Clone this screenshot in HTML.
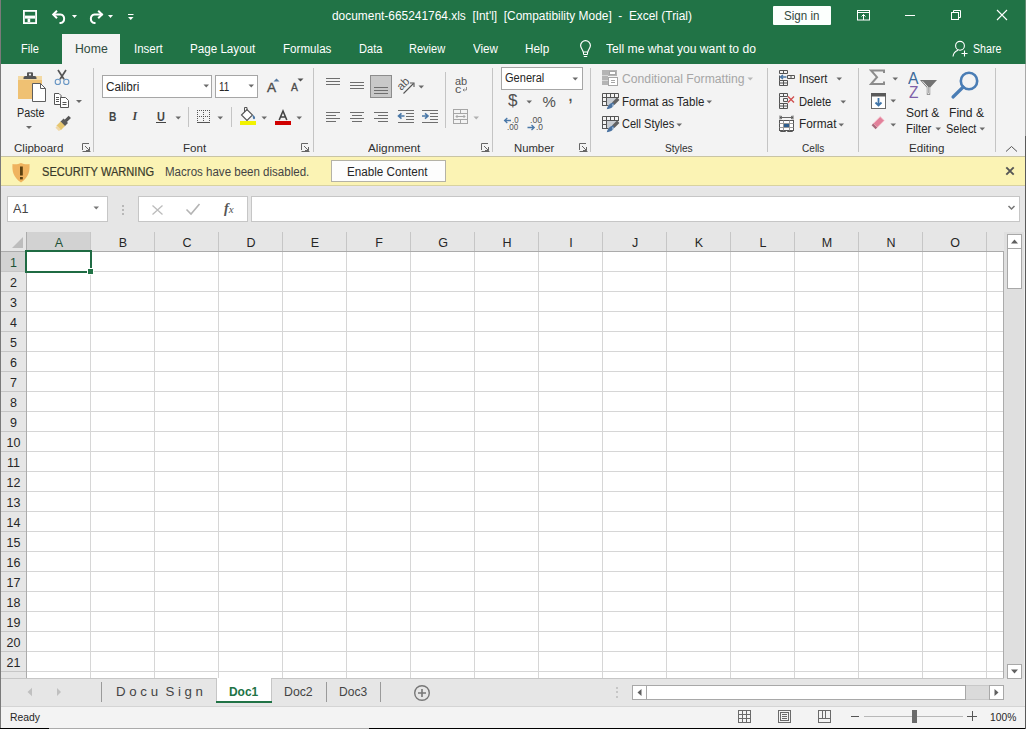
<!DOCTYPE html>
<html><head><meta charset="utf-8"><style>
html,body{margin:0;padding:0;}
body{width:1026px;height:729px;overflow:hidden;position:relative;background:#fff;font-family:"Liberation Sans",sans-serif;}
.r{position:absolute;}
.t{position:absolute;white-space:nowrap;line-height:1;}
.c{text-align:center;}
</style></head><body>
<div class="r" style="left:0px;top:0px;width:1026px;height:64px;background:#217346"></div><div class="r" style="left:0px;top:64px;width:1026px;height:93px;background:#f3f3f3"></div><div class="r" style="left:62px;top:34px;width:58px;height:30px;background:#f3f3f3"></div><div class="r" style="left:0px;top:156px;width:1026px;height:1px;background:#c8c4a4"></div><div class="r" style="left:0px;top:157px;width:1026px;height:29px;background:#fbf3b4"></div><div class="r" style="left:0px;top:185px;width:1026px;height:1px;background:#d8d2a0"></div><div class="r" style="left:0px;top:186px;width:1026px;height:46px;background:#e6e6e6"></div><div class="r" style="left:0px;top:186px;width:1026px;height:2px;background:#e8e6ee"></div><div class="r" style="left:0px;top:232px;width:1026px;height:446px;background:#e6e6e6"></div><div class="r" style="left:26px;top:252px;width:977px;height:426px;background:#ffffff"></div><div class="r" style="left:0px;top:678px;width:1026px;height:28px;background:#e6e6e6"></div><div class="r" style="left:0px;top:678px;width:1004px;height:1px;background:#c6c6c6"></div><div class="r" style="left:0px;top:706px;width:1026px;height:22px;background:#f3f3f3"></div><div class="r" style="left:0px;top:706px;width:1026px;height:1px;background:#d4d4d4"></div><div class="r" style="left:0px;top:728px;width:49px;height:1px;background:#000"></div><div class="r" style="left:49px;top:728px;width:320px;height:1px;background:#aaa"></div><div class="r" style="left:369px;top:728px;width:657px;height:1px;background:#000"></div><div class="t" style="left:332.00px;top:10.34px;font-size:12px;color:#ffffff;transform:scaleX(0.9926);transform-origin:0 0;">document-665241764.xls&nbsp; [Int'l]&nbsp; [Compatibility Mode]&nbsp; -&nbsp; Excel (Trial)</div><div class="r" style="left:773px;top:6px;width:58px;height:19px;background:#fcfffd;border-radius:1px"></div><div class="t" style="left:783.90px;top:10.04px;font-size:12px;color:#33493d;transform:scaleX(0.9648);transform-origin:0 0;">Sign in</div><div class="t" style="left:21.40px;top:42.54px;font-size:12px;color:#ffffff;transform:scaleX(0.9251);transform-origin:0 0;">File</div><div class="t" style="left:74.60px;top:42.54px;font-size:12px;color:#2e4a3c;transform:scaleX(1.0216);transform-origin:0 0;">Home</div><div class="t" style="left:134.00px;top:42.54px;font-size:12px;color:#ffffff;transform:scaleX(0.9600);transform-origin:0 0;">Insert</div><div class="t" style="left:190.00px;top:42.54px;font-size:12px;color:#ffffff;transform:scaleX(0.9691);transform-origin:0 0;">Page Layout</div><div class="t" style="left:282.60px;top:42.54px;font-size:12px;color:#ffffff;transform:scaleX(0.9678);transform-origin:0 0;">Formulas</div><div class="t" style="left:358.50px;top:42.54px;font-size:12px;color:#ffffff;transform:scaleX(0.9231);transform-origin:0 0;">Data</div><div class="t" style="left:409.20px;top:42.54px;font-size:12px;color:#ffffff;transform:scaleX(0.9190);transform-origin:0 0;">Review</div><div class="t" style="left:472.70px;top:42.54px;font-size:12px;color:#ffffff;transform:scaleX(0.9679);transform-origin:0 0;">View</div><div class="t" style="left:525.30px;top:42.54px;font-size:12px;color:#ffffff;transform:scaleX(0.9802);transform-origin:0 0;">Help</div><div class="t" style="left:606.00px;top:42.54px;font-size:12px;color:#ffffff;transform:scaleX(1.0123);transform-origin:0 0;">Tell me what you want to do</div><div class="t" style="left:972.60px;top:42.54px;font-size:12px;color:#ffffff;transform:scaleX(0.8872);transform-origin:0 0;">Share</div><div class="r" style="left:93px;top:68px;width:1px;height:84px;background:#c4c4c4"></div><div class="r" style="left:313px;top:68px;width:1px;height:84px;background:#c4c4c4"></div><div class="r" style="left:492px;top:68px;width:1px;height:84px;background:#c4c4c4"></div><div class="r" style="left:590px;top:68px;width:1px;height:84px;background:#c4c4c4"></div><div class="r" style="left:767px;top:68px;width:1px;height:84px;background:#c4c4c4"></div><div class="r" style="left:858px;top:68px;width:1px;height:84px;background:#c4c4c4"></div><div class="r" style="left:995px;top:68px;width:1px;height:84px;background:#c4c4c4"></div><div class="r" style="left:445px;top:72px;width:1px;height:56px;background:#c4c4c4"></div><div class="r" style="left:188px;top:107px;width:1px;height:20px;background:#c4c4c4"></div><div class="r" style="left:231px;top:107px;width:1px;height:20px;background:#c4c4c4"></div><div class="t" style="left:13.70px;top:142.69px;font-size:11px;color:#303030;transform:scaleX(1.0472);transform-origin:0 0;">Clipboard</div><div class="t" style="left:183.30px;top:142.69px;font-size:11px;color:#303030;transform:scaleX(1.0545);transform-origin:0 0;">Font</div><div class="t" style="left:368.30px;top:142.69px;font-size:11px;color:#303030;transform:scaleX(1.0711);transform-origin:0 0;">Alignment</div><div class="t" style="left:513.70px;top:142.69px;font-size:11px;color:#303030;transform:scaleX(1.0273);transform-origin:0 0;">Number</div><div class="t" style="left:664.80px;top:142.69px;font-size:11px;color:#303030;transform:scaleX(0.9216);transform-origin:0 0;">Styles</div><div class="t" style="left:801.90px;top:142.69px;font-size:11px;color:#303030;transform:scaleX(0.9162);transform-origin:0 0;">Cells</div><div class="t" style="left:908.70px;top:142.69px;font-size:11px;color:#303030;transform:scaleX(1.0555);transform-origin:0 0;">Editing</div><div class="t" style="left:16.50px;top:106.84px;font-size:12px;color:#262626;transform:scaleX(0.8961);transform-origin:0 0;">Paste</div><div class="r" style="left:102px;top:75px;width:110px;height:23px;background:#fff;border:1px solid #a6a6a6;box-sizing:border-box"></div><div class="r" style="left:215px;top:75px;width:43px;height:23px;background:#fff;border:1px solid #a6a6a6;box-sizing:border-box"></div><div class="t" style="left:105.70px;top:80.64px;font-size:12px;color:#262626;transform:scaleX(0.9788);transform-origin:0 0;">Calibri</div><div class="t" style="left:218.80px;top:80.74px;font-size:12px;color:#262626;transform:scaleX(0.8193);transform-origin:0 0;">11</div><div class="r" style="left:501px;top:67px;width:82px;height:23px;background:#fff;border:1px solid #a6a6a6;box-sizing:border-box"></div><div class="t" style="left:504.50px;top:72.24px;font-size:12px;color:#262626;transform:scaleX(0.9206);transform-origin:0 0;">General</div><div class="t" style="left:621.60px;top:72.84px;font-size:12px;color:#a6a6a6;transform:scaleX(1.0156);transform-origin:0 0;">Conditional Formatting</div><div class="t" style="left:621.60px;top:95.64px;font-size:12px;color:#262626;transform:scaleX(0.9600);transform-origin:0 0;">Format as Table</div><div class="t" style="left:621.60px;top:118.34px;font-size:12px;color:#262626;transform:scaleX(0.9206);transform-origin:0 0;">Cell Styles</div><div class="t" style="left:798.60px;top:72.54px;font-size:12px;color:#262626;transform:scaleX(0.9433);transform-origin:0 0;">Insert</div><div class="t" style="left:798.60px;top:95.74px;font-size:12px;color:#262626;transform:scaleX(0.9314);transform-origin:0 0;">Delete</div><div class="t" style="left:798.60px;top:118.34px;font-size:12px;color:#262626;transform:scaleX(0.9866);transform-origin:0 0;">Format</div><div class="t" style="left:906.30px;top:106.84px;font-size:12px;color:#262626;transform:scaleX(1.0012);transform-origin:0 0;">Sort &amp;</div><div class="t" style="left:906.30px;top:122.54px;font-size:12px;color:#262626;transform:scaleX(0.9524);transform-origin:0 0;">Filter</div><div class="t" style="left:948.70px;top:106.84px;font-size:12px;color:#262626;transform:scaleX(1.0092);transform-origin:0 0;">Find &amp;</div><div class="t" style="left:946.30px;top:122.54px;font-size:12px;color:#262626;transform:scaleX(0.9113);transform-origin:0 0;">Select</div><div class="t" style="left:41.60px;top:165.84px;font-size:12px;color:#3a3a2a;-webkit-text-stroke:0.2px #3a3a2a;transform:scaleX(0.9230);transform-origin:0 0;">SECURITY WARNING</div><div class="t" style="left:164.70px;top:165.84px;font-size:12px;color:#444444;transform:scaleX(0.9614);transform-origin:0 0;">Macros have been disabled.</div><div class="r" style="left:331px;top:160px;width:115px;height:22px;background:#fdfdfd;border:1px solid #b4b2a6;box-sizing:border-box"></div><div class="t" style="left:347.30px;top:165.84px;font-size:12px;color:#262626;transform:scaleX(0.9729);transform-origin:0 0;">Enable Content</div><div class="r" style="left:7px;top:196px;width:101px;height:26px;background:#fff;border:1px solid #c6c6c6;box-sizing:border-box"></div><div class="t" style="left:13.40px;top:203.42px;font-size:12.5px;color:#444444;transform:scaleX(1.0078);transform-origin:0 0;">A1</div><div class="r" style="left:138px;top:196px;width:110px;height:26px;background:#fff;border:1px solid #c6c6c6;box-sizing:border-box"></div><div class="r" style="left:251px;top:196px;width:769px;height:26px;background:#fff;border:1px solid #c6c6c6;box-sizing:border-box"></div><div class="r" style="left:26px;top:232px;width:64px;height:19px;background:#d2d2d2"></div><div class="r" style="left:1px;top:252px;width:25px;height:19px;background:#d2d2d2"></div><div class="r" style="left:26px;top:252px;width:1px;height:426px;background:#d6d6d6"></div><div class="r" style="left:26px;top:232px;width:1px;height:19px;background:#c6c6c6"></div><div class="r" style="left:90px;top:252px;width:1px;height:426px;background:#d6d6d6"></div><div class="r" style="left:90px;top:232px;width:1px;height:19px;background:#c6c6c6"></div><div class="r" style="left:154px;top:252px;width:1px;height:426px;background:#d6d6d6"></div><div class="r" style="left:154px;top:232px;width:1px;height:19px;background:#c6c6c6"></div><div class="r" style="left:218px;top:252px;width:1px;height:426px;background:#d6d6d6"></div><div class="r" style="left:218px;top:232px;width:1px;height:19px;background:#c6c6c6"></div><div class="r" style="left:282px;top:252px;width:1px;height:426px;background:#d6d6d6"></div><div class="r" style="left:282px;top:232px;width:1px;height:19px;background:#c6c6c6"></div><div class="r" style="left:346px;top:252px;width:1px;height:426px;background:#d6d6d6"></div><div class="r" style="left:346px;top:232px;width:1px;height:19px;background:#c6c6c6"></div><div class="r" style="left:410px;top:252px;width:1px;height:426px;background:#d6d6d6"></div><div class="r" style="left:410px;top:232px;width:1px;height:19px;background:#c6c6c6"></div><div class="r" style="left:474px;top:252px;width:1px;height:426px;background:#d6d6d6"></div><div class="r" style="left:474px;top:232px;width:1px;height:19px;background:#c6c6c6"></div><div class="r" style="left:538px;top:252px;width:1px;height:426px;background:#d6d6d6"></div><div class="r" style="left:538px;top:232px;width:1px;height:19px;background:#c6c6c6"></div><div class="r" style="left:602px;top:252px;width:1px;height:426px;background:#d6d6d6"></div><div class="r" style="left:602px;top:232px;width:1px;height:19px;background:#c6c6c6"></div><div class="r" style="left:666px;top:252px;width:1px;height:426px;background:#d6d6d6"></div><div class="r" style="left:666px;top:232px;width:1px;height:19px;background:#c6c6c6"></div><div class="r" style="left:730px;top:252px;width:1px;height:426px;background:#d6d6d6"></div><div class="r" style="left:730px;top:232px;width:1px;height:19px;background:#c6c6c6"></div><div class="r" style="left:794px;top:252px;width:1px;height:426px;background:#d6d6d6"></div><div class="r" style="left:794px;top:232px;width:1px;height:19px;background:#c6c6c6"></div><div class="r" style="left:858px;top:252px;width:1px;height:426px;background:#d6d6d6"></div><div class="r" style="left:858px;top:232px;width:1px;height:19px;background:#c6c6c6"></div><div class="r" style="left:922px;top:252px;width:1px;height:426px;background:#d6d6d6"></div><div class="r" style="left:922px;top:232px;width:1px;height:19px;background:#c6c6c6"></div><div class="r" style="left:986px;top:252px;width:1px;height:426px;background:#d6d6d6"></div><div class="r" style="left:986px;top:232px;width:1px;height:19px;background:#c6c6c6"></div><div class="r" style="left:26px;top:251px;width:977px;height:1px;background:#d6d6d6"></div><div class="r" style="left:1px;top:251px;width:25px;height:1px;background:#c6c6c6"></div><div class="r" style="left:26px;top:271px;width:977px;height:1px;background:#d6d6d6"></div><div class="r" style="left:1px;top:271px;width:25px;height:1px;background:#c6c6c6"></div><div class="r" style="left:26px;top:291px;width:977px;height:1px;background:#d6d6d6"></div><div class="r" style="left:1px;top:291px;width:25px;height:1px;background:#c6c6c6"></div><div class="r" style="left:26px;top:311px;width:977px;height:1px;background:#d6d6d6"></div><div class="r" style="left:1px;top:311px;width:25px;height:1px;background:#c6c6c6"></div><div class="r" style="left:26px;top:331px;width:977px;height:1px;background:#d6d6d6"></div><div class="r" style="left:1px;top:331px;width:25px;height:1px;background:#c6c6c6"></div><div class="r" style="left:26px;top:351px;width:977px;height:1px;background:#d6d6d6"></div><div class="r" style="left:1px;top:351px;width:25px;height:1px;background:#c6c6c6"></div><div class="r" style="left:26px;top:371px;width:977px;height:1px;background:#d6d6d6"></div><div class="r" style="left:1px;top:371px;width:25px;height:1px;background:#c6c6c6"></div><div class="r" style="left:26px;top:391px;width:977px;height:1px;background:#d6d6d6"></div><div class="r" style="left:1px;top:391px;width:25px;height:1px;background:#c6c6c6"></div><div class="r" style="left:26px;top:411px;width:977px;height:1px;background:#d6d6d6"></div><div class="r" style="left:1px;top:411px;width:25px;height:1px;background:#c6c6c6"></div><div class="r" style="left:26px;top:431px;width:977px;height:1px;background:#d6d6d6"></div><div class="r" style="left:1px;top:431px;width:25px;height:1px;background:#c6c6c6"></div><div class="r" style="left:26px;top:451px;width:977px;height:1px;background:#d6d6d6"></div><div class="r" style="left:1px;top:451px;width:25px;height:1px;background:#c6c6c6"></div><div class="r" style="left:26px;top:471px;width:977px;height:1px;background:#d6d6d6"></div><div class="r" style="left:1px;top:471px;width:25px;height:1px;background:#c6c6c6"></div><div class="r" style="left:26px;top:491px;width:977px;height:1px;background:#d6d6d6"></div><div class="r" style="left:1px;top:491px;width:25px;height:1px;background:#c6c6c6"></div><div class="r" style="left:26px;top:511px;width:977px;height:1px;background:#d6d6d6"></div><div class="r" style="left:1px;top:511px;width:25px;height:1px;background:#c6c6c6"></div><div class="r" style="left:26px;top:531px;width:977px;height:1px;background:#d6d6d6"></div><div class="r" style="left:1px;top:531px;width:25px;height:1px;background:#c6c6c6"></div><div class="r" style="left:26px;top:551px;width:977px;height:1px;background:#d6d6d6"></div><div class="r" style="left:1px;top:551px;width:25px;height:1px;background:#c6c6c6"></div><div class="r" style="left:26px;top:571px;width:977px;height:1px;background:#d6d6d6"></div><div class="r" style="left:1px;top:571px;width:25px;height:1px;background:#c6c6c6"></div><div class="r" style="left:26px;top:591px;width:977px;height:1px;background:#d6d6d6"></div><div class="r" style="left:1px;top:591px;width:25px;height:1px;background:#c6c6c6"></div><div class="r" style="left:26px;top:611px;width:977px;height:1px;background:#d6d6d6"></div><div class="r" style="left:1px;top:611px;width:25px;height:1px;background:#c6c6c6"></div><div class="r" style="left:26px;top:631px;width:977px;height:1px;background:#d6d6d6"></div><div class="r" style="left:1px;top:631px;width:25px;height:1px;background:#c6c6c6"></div><div class="r" style="left:26px;top:651px;width:977px;height:1px;background:#d6d6d6"></div><div class="r" style="left:1px;top:651px;width:25px;height:1px;background:#c6c6c6"></div><div class="r" style="left:26px;top:671px;width:977px;height:1px;background:#d6d6d6"></div><div class="r" style="left:1px;top:671px;width:25px;height:1px;background:#c6c6c6"></div><div class="r" style="left:1px;top:251px;width:1002px;height:1px;background:#ababab"></div><div class="r" style="left:26px;top:232px;width:1px;height:446px;background:#ababab"></div><div class="r" style="left:1003px;top:251px;width:1px;height:427px;background:#ababab"></div><div class="t c" style="left:27px;top:236.84px;width:64px;font-size:12.5px;color:#1e5236">A</div><div class="t c" style="left:91px;top:236.84px;width:64px;font-size:12.5px;color:#262626">B</div><div class="t c" style="left:155px;top:236.84px;width:64px;font-size:12.5px;color:#262626">C</div><div class="t c" style="left:219px;top:236.84px;width:64px;font-size:12.5px;color:#262626">D</div><div class="t c" style="left:283px;top:236.84px;width:64px;font-size:12.5px;color:#262626">E</div><div class="t c" style="left:347px;top:236.84px;width:64px;font-size:12.5px;color:#262626">F</div><div class="t c" style="left:411px;top:236.84px;width:64px;font-size:12.5px;color:#262626">G</div><div class="t c" style="left:475px;top:236.84px;width:64px;font-size:12.5px;color:#262626">H</div><div class="t c" style="left:539px;top:236.84px;width:64px;font-size:12.5px;color:#262626">I</div><div class="t c" style="left:603px;top:236.84px;width:64px;font-size:12.5px;color:#262626">J</div><div class="t c" style="left:667px;top:236.84px;width:64px;font-size:12.5px;color:#262626">K</div><div class="t c" style="left:731px;top:236.84px;width:64px;font-size:12.5px;color:#262626">L</div><div class="t c" style="left:795px;top:236.84px;width:64px;font-size:12.5px;color:#262626">M</div><div class="t c" style="left:859px;top:236.84px;width:64px;font-size:12.5px;color:#262626">N</div><div class="t c" style="left:923px;top:236.84px;width:64px;font-size:12.5px;color:#262626">O</div><div class="t c" style="left:1px;top:257.44px;width:25px;font-size:12.5px;color:#1e5236">1</div><div class="t c" style="left:1px;top:277.44px;width:25px;font-size:12.5px;color:#262626">2</div><div class="t c" style="left:1px;top:297.44px;width:25px;font-size:12.5px;color:#262626">3</div><div class="t c" style="left:1px;top:317.44px;width:25px;font-size:12.5px;color:#262626">4</div><div class="t c" style="left:1px;top:337.44px;width:25px;font-size:12.5px;color:#262626">5</div><div class="t c" style="left:1px;top:357.44px;width:25px;font-size:12.5px;color:#262626">6</div><div class="t c" style="left:1px;top:377.44px;width:25px;font-size:12.5px;color:#262626">7</div><div class="t c" style="left:1px;top:397.44px;width:25px;font-size:12.5px;color:#262626">8</div><div class="t c" style="left:1px;top:417.44px;width:25px;font-size:12.5px;color:#262626">9</div><div class="t c" style="left:1px;top:437.44px;width:25px;font-size:12.5px;color:#262626">10</div><div class="t c" style="left:1px;top:457.44px;width:25px;font-size:12.5px;color:#262626">11</div><div class="t c" style="left:1px;top:477.44px;width:25px;font-size:12.5px;color:#262626">12</div><div class="t c" style="left:1px;top:497.44px;width:25px;font-size:12.5px;color:#262626">13</div><div class="t c" style="left:1px;top:517.44px;width:25px;font-size:12.5px;color:#262626">14</div><div class="t c" style="left:1px;top:537.44px;width:25px;font-size:12.5px;color:#262626">15</div><div class="t c" style="left:1px;top:557.44px;width:25px;font-size:12.5px;color:#262626">16</div><div class="t c" style="left:1px;top:577.44px;width:25px;font-size:12.5px;color:#262626">17</div><div class="t c" style="left:1px;top:597.44px;width:25px;font-size:12.5px;color:#262626">18</div><div class="t c" style="left:1px;top:617.44px;width:25px;font-size:12.5px;color:#262626">19</div><div class="t c" style="left:1px;top:637.44px;width:25px;font-size:12.5px;color:#262626">20</div><div class="t c" style="left:1px;top:657.44px;width:25px;font-size:12.5px;color:#262626">21</div><div class="r" style="left:25px;top:250px;width:67px;height:23px;border:2px solid #1f6b43;box-sizing:border-box"></div><div class="r" style="left:87px;top:268px;width:7px;height:7px;background:#217346;border:1px solid #fff;box-sizing:border-box"></div><div class="r" style="left:216px;top:678px;width:56px;height:25px;background:#fff;border-left:1px solid #c6c6c6;border-right:1px solid #c6c6c6;box-sizing:border-box"></div><div class="r" style="left:216px;top:701px;width:56px;height:2px;background:#217346"></div><div class="t" style="left:115.90px;top:685.00px;font-size:13px;color:#444444;transform:scaleX(1.0202);transform-origin:0 0;">D o c u&nbsp; S i g n</div><div class="t" style="left:229.10px;top:685.00px;font-size:13px;color:#217346;font-weight:700;transform:scaleX(0.9187);transform-origin:0 0;">Doc1</div><div class="t" style="left:283.60px;top:685.00px;font-size:13px;color:#444444;transform:scaleX(0.9455);transform-origin:0 0;">Doc2</div><div class="t" style="left:338.90px;top:685.00px;font-size:13px;color:#444444;transform:scaleX(0.9257);transform-origin:0 0;">Doc3</div><div class="r" style="left:101px;top:682px;width:1px;height:20px;background:#9a9a9a"></div><div class="r" style="left:326px;top:682px;width:1px;height:20px;background:#9a9a9a"></div><div class="r" style="left:380px;top:682px;width:1px;height:20px;background:#9a9a9a"></div><div class="r" style="left:632px;top:685px;width:372px;height:15px;background:#dadada;border:1px solid #c8c8c8;box-sizing:border-box"></div><div class="r" style="left:646px;top:685px;width:320px;height:15px;background:#fff;border:1px solid #a8a8a8;box-sizing:border-box"></div><div class="r" style="left:632px;top:685px;width:15px;height:15px;background:#fff;border:1px solid #a8a8a8;box-sizing:border-box"></div><div class="r" style="left:989px;top:685px;width:15px;height:15px;background:#fff;border:1px solid #a8a8a8;box-sizing:border-box"></div><div class="r" style="left:1004px;top:232px;width:21px;height:446px;background:#dfdfdf"></div><div class="r" style="left:1007px;top:234px;width:15px;height:15px;background:#fff;border:1px solid #a8a8a8;box-sizing:border-box"></div><div class="r" style="left:1007px;top:248px;width:15px;height:41px;background:#fff;border:1px solid #a8a8a8;box-sizing:border-box"></div><div class="r" style="left:1007px;top:664px;width:15px;height:15px;background:#fff;border:1px solid #a8a8a8;box-sizing:border-box"></div><div class="t" style="left:9.70px;top:711.69px;font-size:11px;color:#262626;transform:scaleX(0.9437);transform-origin:0 0;">Ready</div><div class="t" style="left:990.40px;top:711.69px;font-size:11px;color:#262626;transform:scaleX(0.9349);transform-origin:0 0;">100%</div><svg class="r" style="left:22px;top:9px;" width="16" height="16" viewBox="0 0 16 16"><rect x="1.9" y="1.9" width="12.2" height="12.2" fill="none" stroke="#fff" stroke-width="1.8"/><rect x="3" y="6.6" width="10" height="3" fill="#fff"/><rect x="5.6" y="9.5" width="2.6" height="3.5" fill="#fff"/></svg><svg class="r" style="left:50px;top:8px;" width="20" height="17" viewBox="0 0 20 17"><path d="M3.5 6.5 H10.5 A4.3 4.3 0 0 1 10.5 15 H9.5" fill="none" stroke="#fff" stroke-width="2"/><path d="M7 2.8 L3.2 6.5 L7 10.2" fill="none" stroke="#fff" stroke-width="2"/></svg><svg class="r" style="left:71px;top:14px;" width="7" height="5" viewBox="0 0 7 5"><path d="M1 1 H6 L3.5 4 Z" fill="#fff"/></svg><svg class="r" style="left:86px;top:8px;" width="20" height="17" viewBox="0 0 20 17"><path d="M16.5 6.5 H8.5 A4.3 4.3 0 0 0 8.5 15 H9.5" fill="none" stroke="#fff" stroke-width="2"/><path d="M12.2 2.8 L16 6.5 L12.2 10.2" fill="none" stroke="#fff" stroke-width="2"/></svg><svg class="r" style="left:107px;top:14px;" width="7" height="5" viewBox="0 0 7 5"><path d="M1 1 H6 L3.5 4 Z" fill="#fff"/></svg><svg class="r" style="left:127px;top:13px;" width="8" height="8" viewBox="0 0 8 8"><rect x="1" y="1" width="5.5" height="1" fill="#fff"/><path d="M1 4 H6.5 L3.75 7 Z" fill="#fff"/></svg><svg class="r" style="left:856px;top:9px;" width="15" height="13" viewBox="0 0 15 13"><rect x="1.5" y="1.5" width="12" height="9.5" fill="none" stroke="#fff" stroke-width="1"/><path d="M1.5 3.5 H13.5 M7.5 5.5 V11" stroke="#fff" stroke-width="1"/><path d="M5.5 7.5 L7.5 5.5 L9.5 7.5" fill="none" stroke="#fff" stroke-width="1"/></svg><div class="r" style="left:905px;top:15px;width:10px;height:1px;background:#fff"></div><svg class="r" style="left:950px;top:9px;" width="13" height="13" viewBox="0 0 13 13"><rect x="1.5" y="3.5" width="7" height="7" fill="none" stroke="#fff"/><path d="M3.5 3.5 V1.5 H10.5 V8.5 H8.5" fill="none" stroke="#fff"/></svg><svg class="r" style="left:996px;top:9px;" width="12" height="12" viewBox="0 0 12 12"><path d="M1 1 L11 11 M11 1 L1 11" stroke="#fff" stroke-width="1.1"/></svg><svg class="r" style="left:578px;top:39px;" width="15" height="20" viewBox="0 0 15 20"><path d="M5.2 13 C5 10.8 2.6 9.3 2.6 6.6 A4.9 4.9 0 0 1 12.4 6.6 C12.4 9.3 10 10.8 9.8 13 Z" fill="none" stroke="#fff" stroke-width="1.2"/><path d="M5.5 13 V15.5 H9.5 V13" fill="none" stroke="#fff" stroke-width="1"/><path d="M5.8 17.5 H9.2" stroke="#fff" stroke-width="1"/></svg><svg class="r" style="left:951px;top:39px;" width="19" height="19" viewBox="0 0 19 19"><circle cx="9" cy="6.8" r="4.4" fill="none" stroke="#fff" stroke-width="1.1"/><path d="M2 17.5 A7.5 7.5 0 0 1 7 11.2" fill="none" stroke="#fff" stroke-width="1.1"/><path d="M13.5 11.5 V17.5 M10.5 14.5 H16.5" stroke="#fff" stroke-width="1.1"/></svg><svg class="r" style="left:16px;top:70px;" width="32" height="34" viewBox="0 0 32 34"><rect x="2" y="6" width="24" height="23" fill="#efc173"/><rect x="2" y="6" width="24" height="4" fill="#f3d9a3"/><path d="M7.5 9 Q7.2 6 9.5 6 H11 V3.2 Q11 2.2 12 2.2 H16 Q17 2.2 17 3.2 V6 H18.5 Q20.8 6 20.5 9 Z" fill="#555"/><circle cx="14" cy="4.6" r="1.1" fill="#f3f3f3"/><path d="M16.5 13.5 H24.5 L29.5 18.5 V31.5 H16.5 Z" fill="#fff" stroke="#5e5e5e" stroke-width="1"/><path d="M24.5 13.5 V18.5 H29.5" fill="none" stroke="#5e5e5e" stroke-width="1"/></svg><svg class="r" style="left:25px;top:125px;" width="8" height="5" viewBox="0 0 8 5"><path d="M1 1 H7 L4 4 Z" fill="#6a6a6a"/></svg><svg class="r" style="left:54px;top:68px;" width="16" height="18" viewBox="0 0 16 18"><path d="M4 2 L10 11.2 M12 2 L6 11.2" stroke="#555" stroke-width="1.7"/><circle cx="3.8" cy="13.9" r="2.6" fill="none" stroke="#6896c4" stroke-width="1.1"/><circle cx="12.3" cy="13.9" r="2.6" fill="none" stroke="#6896c4" stroke-width="1.1"/></svg><svg class="r" style="left:53px;top:92px;" width="18" height="17" viewBox="0 0 18 17"><path d="M1.5 1.5 H6 L8 3.5 V12.5 H1.5 Z" fill="#fff" stroke="#555" stroke-width="1"/><path d="M3 5.5 H6 M3 7.5 H6 M3 9.5 H6" stroke="#555" stroke-width="1"/><path d="M7.5 5.5 H12.5 L15.5 8.5 V15.5 H7.5 Z" fill="#fff" stroke="#555" stroke-width="1"/><path d="M9.5 10.5 H13.5 M9.5 12.5 H13.5" stroke="#555" stroke-width="1"/></svg><svg class="r" style="left:75px;top:99px;" width="8" height="5" viewBox="0 0 8 5"><path d="M1 1 H7 L4 4 Z" fill="#6a6a6a"/></svg><svg class="r" style="left:54px;top:114px;" width="18" height="17" viewBox="0 0 18 17"><path d="M15.8 2.8 L11.5 7.1" stroke="#555" stroke-width="3.2"/><path d="M11.8 6.8 L8.6 10" stroke="#5a5a5a" stroke-width="6.2"/><path d="M8.8 9.8 L4.6 14" stroke="#e6c66e" stroke-width="6.2"/><path d="M5 13.6 L3.2 15.4" stroke="#f0d8a8" stroke-width="5"/></svg><svg class="r" style="left:203px;top:84px;" width="7" height="4" viewBox="0 0 7 4"><path d="M0.5 0.5 H6 L3.25 3.5 Z" fill="#6a6a6a"/></svg><svg class="r" style="left:247.5px;top:84px;" width="7" height="4" viewBox="0 0 7 4"><path d="M0.5 0.5 H6 L3.25 3.5 Z" fill="#6a6a6a"/></svg><div class="t" style="left:266.50px;top:80.50px;font-size:13px;color:#4a4a4a;-webkit-text-stroke:0.35px #4a4a4a;transform:scaleX(1.0487);transform-origin:0 0;">A</div><svg class="r" style="left:273px;top:78px;" width="7" height="4" viewBox="0 0 7 4"><path d="M0.5 3.5 H6.5 L3.5 0.5 Z" fill="#5578a0"/></svg><div class="t" style="left:291.10px;top:83.03px;font-size:10px;color:#4a4a4a;-webkit-text-stroke:0.3px #4a4a4a;transform:scaleX(1.0337);transform-origin:0 0;">A</div><svg class="r" style="left:297px;top:78px;" width="7" height="4" viewBox="0 0 7 4"><path d="M0.5 0.5 H6.5 L3.5 3.5 Z" fill="#505050"/></svg><div class="t" style="left:108.80px;top:110.84px;font-size:12px;color:#444;font-weight:700;transform:scaleX(0.8535);transform-origin:0 0;">B</div><div class="t" style="left:132.5px;top:110.3px;font-family:'Liberation Serif',serif;font-size:12px;font-weight:700;font-style:italic;color:#444">I</div><div class="t" style="left:156.60px;top:110.84px;font-size:12px;color:#444;font-weight:700;transform:scaleX(0.9112);transform-origin:0 0;">U</div><div class="r" style="left:156px;top:122px;width:9.5px;height:1.3px;background:#444"></div><svg class="r" style="left:174.5px;top:116px;" width="7" height="4" viewBox="0 0 7 4"><path d="M0.5 0.5 H6 L3.25 3.5 Z" fill="#6a6a6a"/></svg><svg class="r" style="left:196px;top:109px;" width="16" height="15" viewBox="0 0 16 15"><path d="M1.5 1 V13 M7.5 1 V13 M13.5 1 V13 M1 1.5 H14 M1 7.5 H14" stroke="#555" stroke-width="1" stroke-dasharray="1 1"/><path d="M1 13.5 H14" stroke="#555" stroke-width="1"/></svg><svg class="r" style="left:217px;top:116px;" width="7" height="4" viewBox="0 0 7 4"><path d="M0.5 0.5 H6 L3.25 3.5 Z" fill="#6a6a6a"/></svg><svg class="r" style="left:238px;top:106px;" width="20" height="20" viewBox="0 0 20 20"><path d="M3.5 9 L9 3.5 L14.5 9 L9 14.5 Z" fill="#fff" stroke="#555" stroke-width="1.1"/><path d="M6.5 6 V1.5 H9 V5" fill="none" stroke="#555" stroke-width="1"/><path d="M14.5 9 Q17.5 10 17 12.5 Q16 14 15 12.5 Z" fill="#4a78a8"/><rect x="2" y="15" width="16" height="4" fill="#f2f200"/></svg><svg class="r" style="left:261px;top:116px;" width="7" height="4" viewBox="0 0 7 4"><path d="M0.5 0.5 H6 L3.25 3.5 Z" fill="#6a6a6a"/></svg><svg class="r" style="left:274px;top:108px;" width="18" height="18" viewBox="0 0 18 18"><path d="M5.2 12 L9 3 L12.8 12 M6.4 9 H11.6" fill="none" stroke="#444" stroke-width="1.6"/><rect x="1" y="13" width="16" height="4" fill="#d00000"/></svg><svg class="r" style="left:296px;top:116px;" width="7" height="4" viewBox="0 0 7 4"><path d="M0.5 0.5 H6 L3.25 3.5 Z" fill="#6a6a6a"/></svg><svg class="r" style="left:82px;top:143px;" width="9" height="9" viewBox="0 0 9 9"><path d="M0.5 7 V0.5 H7" fill="none" stroke="#666" stroke-width="1"/><path d="M3 3 L7.5 7.5 M4 7.5 H7.5 V4" fill="none" stroke="#666" stroke-width="1"/><path d="M8.5 8.5 H0.5" stroke="#666" stroke-width="1"/></svg><svg class="r" style="left:301px;top:143px;" width="9" height="9" viewBox="0 0 9 9"><path d="M0.5 7 V0.5 H7" fill="none" stroke="#666" stroke-width="1"/><path d="M3 3 L7.5 7.5 M4 7.5 H7.5 V4" fill="none" stroke="#666" stroke-width="1"/><path d="M8.5 8.5 H0.5" stroke="#666" stroke-width="1"/></svg><svg class="r" style="left:481px;top:143px;" width="9" height="9" viewBox="0 0 9 9"><path d="M0.5 7 V0.5 H7" fill="none" stroke="#666" stroke-width="1"/><path d="M3 3 L7.5 7.5 M4 7.5 H7.5 V4" fill="none" stroke="#666" stroke-width="1"/><path d="M8.5 8.5 H0.5" stroke="#666" stroke-width="1"/></svg><svg class="r" style="left:579px;top:143px;" width="9" height="9" viewBox="0 0 9 9"><path d="M0.5 7 V0.5 H7" fill="none" stroke="#666" stroke-width="1"/><path d="M3 3 L7.5 7.5 M4 7.5 H7.5 V4" fill="none" stroke="#666" stroke-width="1"/><path d="M8.5 8.5 H0.5" stroke="#666" stroke-width="1"/></svg><svg class="r" style="left:0px;top:0px;" width="1" height="1" viewBox="0 0 1 1"></svg><div class="r" style="left:326px;top:78px;width:14px;height:1px;background:#6e6e6e"></div><div class="r" style="left:326px;top:81px;width:14px;height:1px;background:#6e6e6e"></div><div class="r" style="left:326px;top:84px;width:14px;height:1px;background:#6e6e6e"></div><div class="r" style="left:350px;top:82px;width:14px;height:1px;background:#6e6e6e"></div><div class="r" style="left:350px;top:85px;width:14px;height:1px;background:#6e6e6e"></div><div class="r" style="left:350px;top:88px;width:14px;height:1px;background:#6e6e6e"></div><div class="r" style="left:370px;top:75px;width:22px;height:23px;background:#c8c8c8;border:1px solid #8c8c8c;box-sizing:border-box"></div><div class="r" style="left:374px;top:87px;width:14px;height:1px;background:#6e6e6e"></div><div class="r" style="left:374px;top:90px;width:14px;height:1px;background:#6e6e6e"></div><div class="r" style="left:374px;top:93px;width:14px;height:1px;background:#6e6e6e"></div><div class="r" style="left:326px;top:112px;width:14px;height:1px;background:#6e6e6e"></div><div class="r" style="left:326px;top:115px;width:10px;height:1px;background:#6e6e6e"></div><div class="r" style="left:326px;top:118px;width:14px;height:1px;background:#6e6e6e"></div><div class="r" style="left:326px;top:121px;width:10px;height:1px;background:#6e6e6e"></div><div class="r" style="left:350px;top:112px;width:14px;height:1px;background:#6e6e6e"></div><div class="r" style="left:352px;top:115px;width:10px;height:1px;background:#6e6e6e"></div><div class="r" style="left:350px;top:118px;width:14px;height:1px;background:#6e6e6e"></div><div class="r" style="left:352px;top:121px;width:10px;height:1px;background:#6e6e6e"></div><div class="r" style="left:374px;top:112px;width:14px;height:1px;background:#6e6e6e"></div><div class="r" style="left:378px;top:115px;width:10px;height:1px;background:#6e6e6e"></div><div class="r" style="left:374px;top:118px;width:14px;height:1px;background:#6e6e6e"></div><div class="r" style="left:378px;top:121px;width:10px;height:1px;background:#6e6e6e"></div><div class="t" style="left:396.5px;top:77.5px;font-size:11.5px;color:#555;transform:rotate(-45deg);transform-origin:7px 6px">ab</div><svg class="r" style="left:402px;top:81px;" width="14" height="14" viewBox="0 0 14 14"><path d="M1.5 12.5 L11.5 2.5" stroke="#555" stroke-width="1.1"/><path d="M8 2 H12 V6" fill="none" stroke="#555" stroke-width="1.1"/></svg><svg class="r" style="left:417.5px;top:85px;" width="7" height="4" viewBox="0 0 7 4"><path d="M0.5 0.5 H6 L3.25 3.5 Z" fill="#6a6a6a"/></svg><div class="r" style="left:398px;top:110px;width:16px;height:1px;background:#6e6e6e"></div><div class="r" style="left:406px;top:113px;width:8px;height:1px;background:#6e6e6e"></div><div class="r" style="left:406px;top:116px;width:8px;height:1px;background:#6e6e6e"></div><div class="r" style="left:406px;top:119px;width:8px;height:1px;background:#6e6e6e"></div><div class="r" style="left:398px;top:122px;width:16px;height:1px;background:#6e6e6e"></div><svg class="r" style="left:397px;top:112px;" width="9" height="8" viewBox="0 0 9 8"><path d="M7.5 4 H2 M4.5 1.3 L1.5 4 L4.5 6.7" fill="none" stroke="#4a78a8" stroke-width="1.6"/></svg><div class="r" style="left:422px;top:110px;width:16px;height:1px;background:#6e6e6e"></div><div class="r" style="left:430px;top:113px;width:8px;height:1px;background:#6e6e6e"></div><div class="r" style="left:430px;top:116px;width:8px;height:1px;background:#6e6e6e"></div><div class="r" style="left:430px;top:119px;width:8px;height:1px;background:#6e6e6e"></div><div class="r" style="left:422px;top:122px;width:16px;height:1px;background:#6e6e6e"></div><svg class="r" style="left:421px;top:112px;" width="9" height="8" viewBox="0 0 9 8"><path d="M1 4 H6.5 M4 1.3 L7 4 L4 6.7" fill="none" stroke="#4a78a8" stroke-width="1.6"/></svg><div class="t" style="left:454.50px;top:76.29px;font-size:11px;color:#555;transform:scaleX(0.9969);transform-origin:0 0;">ab</div><div class="t" style="left:454.50px;top:84.53px;font-size:10px;color:#555;transform:scaleX(1.2600);transform-origin:0 0;">c</div><svg class="r" style="left:461.5px;top:87px;" width="6" height="5" viewBox="0 0 6 5"><path d="M4.5 0 V3 H1 M2.3 1.8 L1 3 L2.3 4.2" fill="none" stroke="#777" stroke-width="0.8"/></svg><svg class="r" style="left:452px;top:108px;" width="17" height="17" viewBox="0 0 17 17"><rect x="1.5" y="1.5" width="14" height="14" fill="none" stroke="#a6a6a6"/><path d="M1.5 5.5 H15.5 M1.5 11.5 H15.5 M8.5 1.5 V5.5 M8.5 11.5 V15.5 M4 8.5 H13 M5.5 7 L4 8.5 L5.5 10 M11.5 7 L13 8.5 L11.5 10" fill="none" stroke="#a6a6a6"/></svg><svg class="r" style="left:473px;top:116px;" width="7" height="4" viewBox="0 0 7 4"><path d="M0.5 0.5 H6 L3.25 3.5 Z" fill="#b0b0b0"/></svg><svg class="r" style="left:572px;top:77px;" width="7" height="4" viewBox="0 0 7 4"><path d="M0.5 0.5 H6 L3.25 3.5 Z" fill="#6a6a6a"/></svg><div class="t" style="left:508.00px;top:92.11px;font-size:17px;color:#505050;">$</div><svg class="r" style="left:525.5px;top:100px;" width="7" height="4" viewBox="0 0 7 4"><path d="M0.5 0.5 H6 L3.25 3.5 Z" fill="#6a6a6a"/></svg><div class="t" style="left:542.50px;top:93.80px;font-size:15px;color:#505050;">%</div><div class="t" style="left:568.50px;top:88.65px;font-size:14px;color:#505050;"><b>,</b></div><svg class="r" style="left:503px;top:116px;" width="17" height="15" viewBox="0 0 17 15"><path d="M8 4.5 H1.8 M4.3 2 L1.6 4.5 L4.3 7" fill="none" stroke="#4a78a8" stroke-width="1.3"/></svg><div class="t" style="left:511.50px;top:114.96px;font-size:9.5px;color:#505050;transform:scaleX(0.8320);transform-origin:0 0;">.0</div><div class="t" style="left:507.00px;top:121.96px;font-size:9.5px;color:#505050;transform:scaleX(0.8482);transform-origin:0 0;">.00</div><div class="t" style="left:530.30px;top:114.96px;font-size:9.5px;color:#505050;transform:scaleX(0.9087);transform-origin:0 0;">.00</div><svg class="r" style="left:527px;top:123px;" width="10" height="8" viewBox="0 0 10 8"><path d="M0.5 4.5 H7 M4.5 2 L7.2 4.5 L4.5 7" fill="none" stroke="#4a78a8" stroke-width="1.3"/></svg><div class="t" style="left:535.50px;top:121.96px;font-size:9.5px;color:#505050;transform:scaleX(0.8824);transform-origin:0 0;">.0</div><svg class="r" style="left:601px;top:69px;" width="18" height="18" viewBox="0 0 18 18"><rect x="1" y="1" width="15" height="6" fill="#b4b4b4"/><rect x="1" y="1" width="6" height="15" fill="#b4b4b4"/><path d="M1 6.5 H7 M1 11.5 H7" stroke="#e0e0e0" stroke-width="0.8"/><rect x="8.5" y="2.5" width="6" height="3" fill="#fff" stroke="#a6a6a6" stroke-width="1"/><rect x="7.5" y="8.5" width="9" height="8" fill="#fff" stroke="#a6a6a6"/><path d="M10 11.5 H14 M10 13.5 H14" stroke="#a6a6a6"/></svg><svg class="r" style="left:747px;top:77px;" width="7" height="4" viewBox="0 0 7 4"><path d="M0.5 0.5 H6 L3.25 3.5 Z" fill="#b8b8b8"/></svg><svg class="r" style="left:601px;top:92px;" width="19" height="18" viewBox="0 0 19 18"><path d="M5.5 5.5 H17.5 V8.5 L10.5 13.5 H5.5 Z" fill="#c9cdd2"/><path d="M1.5 14 V1.5 H17.5 V6 M1.5 13.5 H7.5 M1.5 5.5 H17.5 M1.5 9.5 H5.5 M5.5 1.5 V13.5 M9.5 1.5 V5.5 M13.5 1.5 V5.5" fill="none" stroke="#555"/><path d="M17.2 6.8 L12.2 11.8" stroke="#626262" stroke-width="3.4"/><path d="M12.6 10.8 C10 10.3 6.8 12.8 5.8 17.2 C9 17.2 12.2 15.6 13.2 12.6 Z" fill="#4a72a0"/><path d="M11.8 12.2 Q12.4 13.2 11.6 14.4" fill="none" stroke="#dfe8f0" stroke-width="0.9"/></svg><svg class="r" style="left:601px;top:115px;" width="19" height="18" viewBox="0 0 19 18"><path d="M5.5 5.5 H17.5 V8.5 L10.5 13.5 H5.5 Z" fill="#c9cdd2"/><path d="M1.5 14 V1.5 H17.5 V6 M1.5 13.5 H7.5 M1.5 5.5 H17.5 M1.5 9.5 H5.5 M5.5 1.5 V13.5 M9.5 1.5 V5.5 M13.5 1.5 V5.5" fill="none" stroke="#555"/><path d="M17.2 6.8 L12.2 11.8" stroke="#626262" stroke-width="3.4"/><path d="M12.6 10.8 C10 10.3 6.8 12.8 5.8 17.2 C9 17.2 12.2 15.6 13.2 12.6 Z" fill="#4a72a0"/><path d="M11.8 12.2 Q12.4 13.2 11.6 14.4" fill="none" stroke="#dfe8f0" stroke-width="0.9"/></svg><svg class="r" style="left:706px;top:100px;" width="7" height="4" viewBox="0 0 7 4"><path d="M0.5 0.5 H6 L3.25 3.5 Z" fill="#6a6a6a"/></svg><svg class="r" style="left:676px;top:123px;" width="7" height="4" viewBox="0 0 7 4"><path d="M0.5 0.5 H6 L3.25 3.5 Z" fill="#6a6a6a"/></svg><svg class="r" style="left:778px;top:69px;" width="18" height="18" viewBox="0 0 18 18"><path d="M1.5 1.5 H9.5 V4.5 H1.5 Z M5.5 1.5 V4.5 M1.5 11.5 H9.5 V16.5 H1.5 Z M5.5 11.5 V16.5 M1.5 14 H9.5 M9.5 6.5 H16.5 V9.5 H9.5 Z M13 6.5 V9.5" fill="none" stroke="#555"/><path d="M1.5 6.5 V11.5" stroke="#555"/><path d="M8.5 8 H3 M5 6 L2.5 8 L5 10" fill="none" stroke="#4a78a8" stroke-width="1.5"/></svg><svg class="r" style="left:836px;top:77px;" width="7" height="4" viewBox="0 0 7 4"><path d="M0.5 0.5 H6 L3.25 3.5 Z" fill="#6a6a6a"/></svg><svg class="r" style="left:778px;top:92px;" width="18" height="18" viewBox="0 0 18 18"><path d="M1.5 1.5 H9.5 V4.5 H1.5 Z M5.5 1.5 V4.5 M1.5 11.5 H9.5 V16.5 H1.5 Z M5.5 11.5 V16.5 M1.5 14 H9.5 M5.5 6.5 H9.5 V9.5 H5.5 Z M1.5 4.5 V11.5" fill="none" stroke="#555"/><path d="M10 4.5 L16 10.5 M16 4.5 L10 10.5" stroke="#d05050" stroke-width="1.4"/></svg><svg class="r" style="left:840px;top:100px;" width="7" height="4" viewBox="0 0 7 4"><path d="M0.5 0.5 H6 L3.25 3.5 Z" fill="#6a6a6a"/></svg><svg class="r" style="left:778px;top:115px;" width="18" height="18" viewBox="0 0 18 18"><path d="M2 2.5 H15 M2 0.5 V4.5 M15 0.5 V4.5 M4 1 L2 2.5 L4 4 M13 1 L15 2.5 L13 4" fill="none" stroke="#555" stroke-width="0.9"/><rect x="1.5" y="5.5" width="14" height="10" fill="#fff" stroke="#555"/><path d="M1.5 8.5 H15.5 M1.5 12.5 H15.5 M5.5 5.5 V15.5 M11.5 5.5 V15.5" stroke="#9a9a9a"/><rect x="6" y="9" width="5" height="3" fill="#2f5f8f"/><path d="M2.5 15.5 V16.5 H7.5 V15.5 M9.5 15.5 V16.5 H14.5 V15.5" fill="none" stroke="#555"/></svg><svg class="r" style="left:838px;top:123px;" width="7" height="4" viewBox="0 0 7 4"><path d="M0.5 0.5 H6 L3.25 3.5 Z" fill="#6a6a6a"/></svg><svg class="r" style="left:869px;top:69px;" width="17" height="17" viewBox="0 0 17 17"><path d="M15 4 V1.5 H2 L8 8.2 L2 15 H15 V12.5" fill="none" stroke="#8c8c8c" stroke-width="2"/></svg><svg class="r" style="left:891.5px;top:77px;" width="7" height="4" viewBox="0 0 7 4"><path d="M0.5 0.5 H6 L3.25 3.5 Z" fill="#6a6a6a"/></svg><svg class="r" style="left:870px;top:92px;" width="17" height="18" viewBox="0 0 17 18"><rect x="1.5" y="1.5" width="14" height="15" fill="#fff" stroke="#6a6a6a"/><rect x="1" y="1" width="15" height="3.5" fill="#5a5a5a"/><path d="M8.5 6 V13.5 M5.5 10.5 L8.5 13.5 L11.5 10.5" fill="none" stroke="#3f74a8" stroke-width="1.8"/></svg><svg class="r" style="left:889.5px;top:99px;" width="7" height="4" viewBox="0 0 7 4"><path d="M0.5 0.5 H6 L3.25 3.5 Z" fill="#6a6a6a"/></svg><svg class="r" style="left:869px;top:114px;" width="18" height="17" viewBox="0 0 18 17"><path d="M11.2 2.6 L15.2 6.6 L8.2 13.6 L4.2 9.6 Z" fill="#e2809a" stroke="#f6c8d2" stroke-width="0.8"/><path d="M4.2 9.6 L8.2 13.6 L6.6 15.2 L2.6 11.2 Z" fill="#a8687a"/></svg><svg class="r" style="left:889.5px;top:123px;" width="7" height="4" viewBox="0 0 7 4"><path d="M0.5 0.5 H6 L3.25 3.5 Z" fill="#6a6a6a"/></svg><div class="t" style="left:908.40px;top:70.96px;font-size:16px;color:#3b6a9a;transform:scaleX(0.9831);transform-origin:0 0;">A</div><div class="t" style="left:909.10px;top:85.26px;font-size:16px;color:#7e5fa8;transform:scaleX(0.9631);transform-origin:0 0;">Z</div><svg class="r" style="left:919px;top:79px;" width="19" height="17" viewBox="0 0 19 17"><path d="M1 1 H18 L11.2 8.5 V15.8 H7.8 V8.5 Z" fill="#737373"/><path d="M3.5 2.2 L8.8 8 V14.6 H10.2 V8.2" fill="none" stroke="#f3f3f3" stroke-width="0.9"/></svg><svg class="r" style="left:934.5px;top:127px;" width="7" height="4" viewBox="0 0 7 4"><path d="M0.5 0.5 H6 L3.25 3.5 Z" fill="#6a6a6a"/></svg><svg class="r" style="left:950px;top:70px;" width="32" height="31" viewBox="0 0 32 31"><circle cx="19" cy="11" r="8.2" fill="none" stroke="#4a7db5" stroke-width="2.6"/><path d="M13.2 17 L3 27" stroke="#4a7db5" stroke-width="3.2" stroke-linecap="round"/></svg><svg class="r" style="left:979px;top:127px;" width="7" height="4" viewBox="0 0 7 4"><path d="M0.5 0.5 H6 L3.25 3.5 Z" fill="#6a6a6a"/></svg><svg class="r" style="left:1005px;top:145px;" width="13" height="8" viewBox="0 0 13 8"><path d="M1 6.5 L6.5 1.5 L12 6.5" fill="none" stroke="#555" stroke-width="1"/></svg><svg class="r" style="left:10px;top:161px;" width="22" height="23" viewBox="0 0 22 23"><path d="M11 2 C8 3.5 5 3.5 2.5 3 C2 10 3 16 11 21.5 C19 16 20 10 19.5 3 C17 3.5 14 3.5 11 2 Z" fill="#efb35f"/><rect x="10" y="5.5" width="2.8" height="9" fill="#5a4010"/><rect x="10" y="16" width="2.8" height="2.4" fill="#5a4010"/></svg><svg class="r" style="left:1004px;top:165px;" width="12" height="12" viewBox="0 0 12 12"><path d="M2.3 2.3 L9.7 9.7 M9.7 2.3 L2.3 9.7" stroke="#555" stroke-width="1.9"/></svg><svg class="r" style="left:93px;top:206px;" width="7" height="4" viewBox="0 0 7 4"><path d="M0.5 0.5 H6 L3.25 3.5 Z" fill="#777"/></svg><div class="r" style="left:122px;top:205px;width:2px;height:2px;background:#b8b8b8"></div><div class="r" style="left:122px;top:209px;width:2px;height:2px;background:#b8b8b8"></div><div class="r" style="left:122px;top:213px;width:2px;height:2px;background:#b8b8b8"></div><svg class="r" style="left:150px;top:203px;" width="14" height="14" viewBox="0 0 14 14"><path d="M2.5 2.5 L12.5 11.5 M12.5 2.5 L2.5 11.5" stroke="#bcbcbc" stroke-width="1.3"/></svg><svg class="r" style="left:185px;top:202px;" width="16" height="14" viewBox="0 0 16 14"><path d="M1.5 7.5 L6 12 L14.5 2" fill="none" stroke="#b4b4b4" stroke-width="1.6"/></svg><div class="t" style="left:224px;top:201.5px;font-family:'Liberation Serif',serif;font-size:14px;font-style:italic;color:#555;"><b>f</b><span style="font-size:11px">x</span></div><svg class="r" style="left:1006px;top:204px;" width="11" height="8" viewBox="0 0 11 8"><path d="M2.5 2 L5.5 5 L8.5 2" fill="none" stroke="#777" stroke-width="1.5"/></svg><svg class="r" style="left:11px;top:236px;" width="13" height="13" viewBox="0 0 13 13"><path d="M12 1 V12 H1 Z" fill="#bdbdbd"/></svg><svg class="r" style="left:1007px;top:234px;" width="15" height="15" viewBox="0 0 15 15"><path d="M4 9.5 H11 L7.5 5.5 Z" fill="#606060"/></svg><svg class="r" style="left:1007px;top:664px;" width="15" height="15" viewBox="0 0 15 15"><path d="M4 5.5 H11 L7.5 9.5 Z" fill="#606060"/></svg><svg class="r" style="left:632px;top:685px;" width="15" height="15" viewBox="0 0 15 15"><path d="M9.5 4 V11 L5.5 7.5 Z" fill="#606060"/></svg><svg class="r" style="left:989px;top:685px;" width="15" height="15" viewBox="0 0 15 15"><path d="M5.5 4 V11 L9.5 7.5 Z" fill="#606060"/></svg><div class="r" style="left:615.5px;top:686.5px;width:2px;height:2px;background:#bbbbbb;border-radius:1px"></div><div class="r" style="left:615.5px;top:691px;width:2px;height:2px;background:#bbbbbb;border-radius:1px"></div><div class="r" style="left:615.5px;top:695.5px;width:2px;height:2px;background:#bbbbbb;border-radius:1px"></div><svg class="r" style="left:25px;top:686px;" width="10" height="12" viewBox="0 0 10 12"><path d="M7 1.8 V10.2 L2.5 6 Z" fill="#c0c0c0"/></svg><svg class="r" style="left:54px;top:686px;" width="10" height="12" viewBox="0 0 10 12"><path d="M3 2 V10 L7 6 Z" fill="#c0c0c0"/></svg><svg class="r" style="left:413px;top:684px;" width="18" height="18" viewBox="0 0 18 18"><circle cx="9" cy="9" r="7.3" fill="none" stroke="#777" stroke-width="1.4"/><path d="M9 5 V13 M5 9 H13" stroke="#777" stroke-width="1.6"/></svg><svg class="r" style="left:737px;top:709px;" width="15" height="15" viewBox="0 0 15 15"><rect x="1.5" y="1.5" width="12" height="12" fill="none" stroke="#6a6a6a"/><path d="M1.5 5.5 H13.5 M1.5 9.5 H13.5 M5.5 1.5 V13.5 M9.5 1.5 V13.5" stroke="#6a6a6a"/></svg><svg class="r" style="left:777px;top:709px;" width="15" height="15" viewBox="0 0 15 15"><rect x="1.5" y="1.5" width="12" height="12" fill="none" stroke="#6a6a6a"/><rect x="3.5" y="3.5" width="8" height="8" fill="none" stroke="#6a6a6a"/><path d="M5 5.5 H10 M5 7.5 H10 M5 9.5 H10" stroke="#6a6a6a"/></svg><svg class="r" style="left:817px;top:709px;" width="15" height="15" viewBox="0 0 15 15"><rect x="1.5" y="1.5" width="12" height="12" fill="none" stroke="#6a6a6a"/><path d="M1.5 9.5 H13.5 M5.5 1.5 V9.5 M8.5 1.5 V9.5" fill="none" stroke="#6a6a6a"/></svg><div class="r" style="left:851px;top:716px;width:8px;height:1px;background:#555"></div><div class="r" style="left:864px;top:716px;width:99px;height:1px;background:#b8b8b8"></div><div class="r" style="left:912px;top:710px;width:5px;height:13px;background:#6a6a6a"></div><div class="r" style="left:967px;top:716px;width:10px;height:1px;background:#555"></div><div class="r" style="left:971.5px;top:711px;width:1px;height:10px;background:#555"></div><div class="r" style="left:0px;top:0px;width:1px;height:728px;background:#7a7a7a"></div><div class="r" style="left:1025px;top:0px;width:1px;height:64px;background:#5f8a70"></div><div class="r" style="left:1025px;top:64px;width:1px;height:72px;background:#a8a8a8"></div><div class="r" style="left:1025px;top:136px;width:1px;height:593px;background:#5a5a5a"></div><div class="r" style="left:1024px;top:232px;width:1px;height:474px;background:#eeeeee"></div>
</body></html>
